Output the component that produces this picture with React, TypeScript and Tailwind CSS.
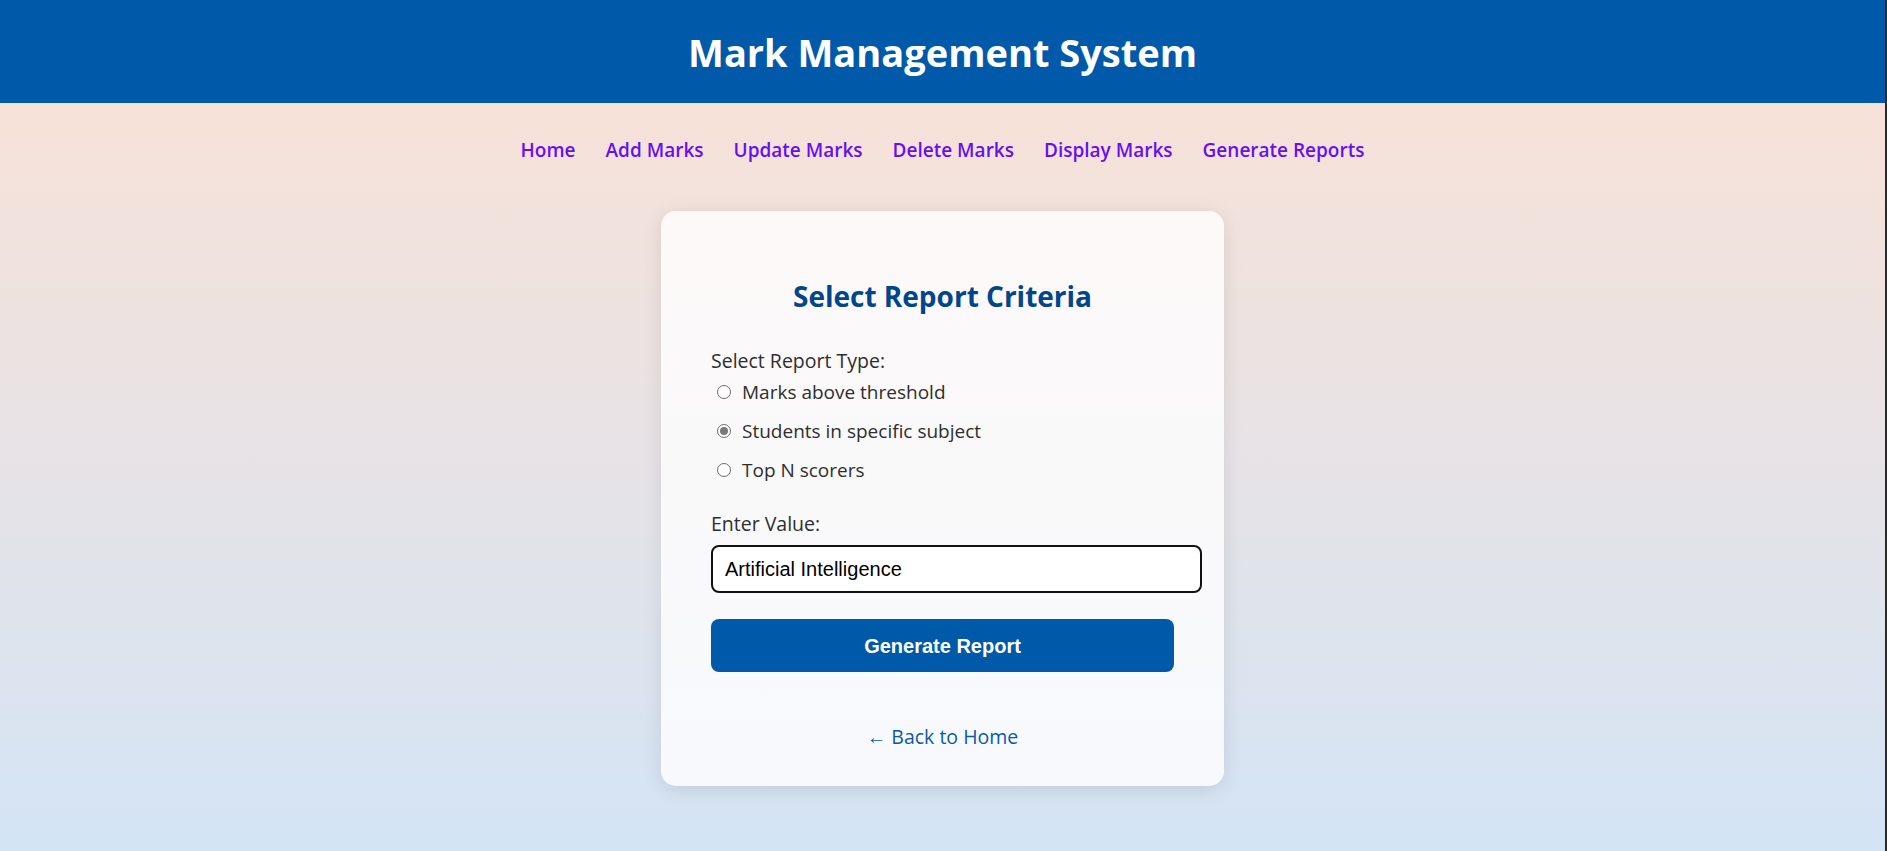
import React from "react";

const sans = "font-['Open_Sans','Noto_Sans',sans-serif]";

function Radio({ label, checked }: { label: string; checked?: boolean }) {
  return (
    <label className="flex h-[26px] items-center">
      <span className="ml-[6px] flex h-[14px] w-[14px] items-center justify-center rounded-full border border-[#6f6f6f] bg-white">
        {checked && <span className="h-[8px] w-[8px] rounded-full bg-[#7a7a7a]" />}
      </span>
      <span className="ml-[11px] text-[19px] font-medium leading-[26px] text-[#2e2e2e]">{label}</span>
    </label>
  );
}

export default function App() {
  const links = ["Home", "Add Marks", "Update Marks", "Delete Marks", "Display Marks", "Generate Reports"];
  return (
    <div className={`flex min-h-[851px] ${sans}`}>
      <div className="min-h-[851px] flex-1 bg-gradient-to-b from-[#fce1d4] to-[#d3e4f5]">
        <header className="flex h-[103px] items-center justify-center bg-[#005aa9]">
          <h1 className="text-[38px] font-bold leading-none text-white">Mark Management System</h1>
        </header>
        <nav className="flex justify-center gap-[30px] pt-[33px]">
          {links.map((l) => (
            <a key={l} className="text-[19px] font-semibold leading-[28px] text-[#6610f2]" href="#">
              {l}
            </a>
          ))}
        </nav>
        <div className="mx-auto mt-[47px] w-[563px] rounded-[15px] bg-white/80 px-[50px] pb-[36px] pt-[65px] shadow-[0_4px_20px_rgba(0,0,0,0.1)]">
          <h2 className="text-center text-[28px] font-bold leading-[40px] text-[#00468c]">Select Report Criteria</h2>
          <div className="mt-[32px] text-[19.5px] font-medium leading-[26px] text-[#2e2e2e]">Select Report Type:</div>
          <div className="mt-[5px] flex flex-col gap-[13px]">
            <Radio label="Marks above threshold" />
            <Radio label="Students in specific subject" checked />
            <Radio label="Top N scorers" />
          </div>
          <div className="mt-[28px] text-[19.5px] font-medium leading-[26px] text-[#2e2e2e]">Enter Value:</div>
          <div className="mt-[8px] flex h-[48px] w-[491px] items-center rounded-[8px] border-2 border-[#111] bg-white px-[12px] font-['Liberation_Sans',Arial,sans-serif] text-[20px] text-black">
            Artificial Intelligence
          </div>
          <button className="mt-[26px] flex h-[53px] w-full items-center justify-center rounded-[8px] bg-[#005aa9] font-['Liberation_Sans',Arial,sans-serif] text-[20px] font-bold text-white">
            Generate Report
          </button>
          <div className="mt-[52px] text-center">
            <a href="#" className="text-[19.5px] font-medium leading-[26px] text-[#0a5aa6]">
              ← Back to Home
            </a>
          </div>
        </div>
      </div>
      <div className="w-[2px] bg-[#2a2a2a]" />
    </div>
  );
}
